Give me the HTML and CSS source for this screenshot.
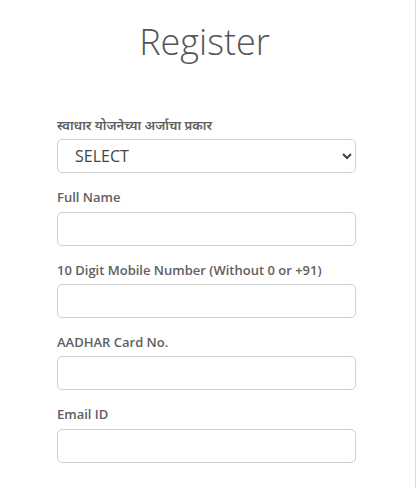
FILE: index.html
```html
<!DOCTYPE html>
<html lang="en">
<head>
  <meta charset="UTF-8" />
  <meta name="viewport" content="width=device-width, initial-scale=1.0" />
  <title>Register</title>
  <link rel="stylesheet" href="styles.css">
</head>
<body>

  <div class="panel">
    <h1>Register</h1>

    <form class="register-form">
      <div class="form-group">
        <label for="type">स्वाधार योजनेच्या अर्जाचा प्रकार</label>
        <select id="type">
          <option>SELECT</option>
        </select>
      </div>

      <div class="form-group">
        <label for="name">Full Name</label>
        <input type="text" id="name">
      </div>

      <div class="form-group">
        <label for="mobile">10 Digit Mobile Number (Without 0 or +91)</label>
        <input type="text" id="mobile">
      </div>

      <div class="form-group">
        <label for="aadhar">AADHAR Card No.</label>
        <input type="text" id="aadhar">
      </div>

      <div class="form-group">
        <label for="email">Email ID</label>
        <input type="email" id="email">
      </div>
    </form>
  </div>

</body>
</html>
```

FILE: styles.css
```css
body {
  font-family: 'Open Sans', 'Noto Sans Devanagari', 'Noto Sans', sans-serif;
  margin: 0;
  background: #fff;
  color: #333;
}

.panel {
  width: 416px;
  min-height: 488px;
  border-right: 1px solid #dcdcdc;
  padding-top: 20px;
  box-sizing: border-box;
}

h1 {
  text-align: center;
  font-weight: 300;
  font-size: 36px;
  line-height: 1.2;
  color: #555;
  margin: 0 0 54px;
  padding-right: 6px;
}

.register-form {
  width: 299px;
  margin-left: 57px;
}

.form-group {
  margin-bottom: 16px;
}

label {
  display: block;
  font-size: 13px;
  font-weight: 600;
  line-height: 17.3px;
  color: #606060;
  margin-bottom: 5px;
}

input,
select {
  display: block;
  width: 100%;
  height: 34px;
  box-sizing: border-box;
  border: 1px solid #cfcfcf;
  border-radius: 5px;
  background: #fff;
  font-family: inherit;
  font-size: 16px;
  color: #444;
}

input {
  padding: 0 12px;
}

select {
  padding: 0 4px 0 13px;
}
```
